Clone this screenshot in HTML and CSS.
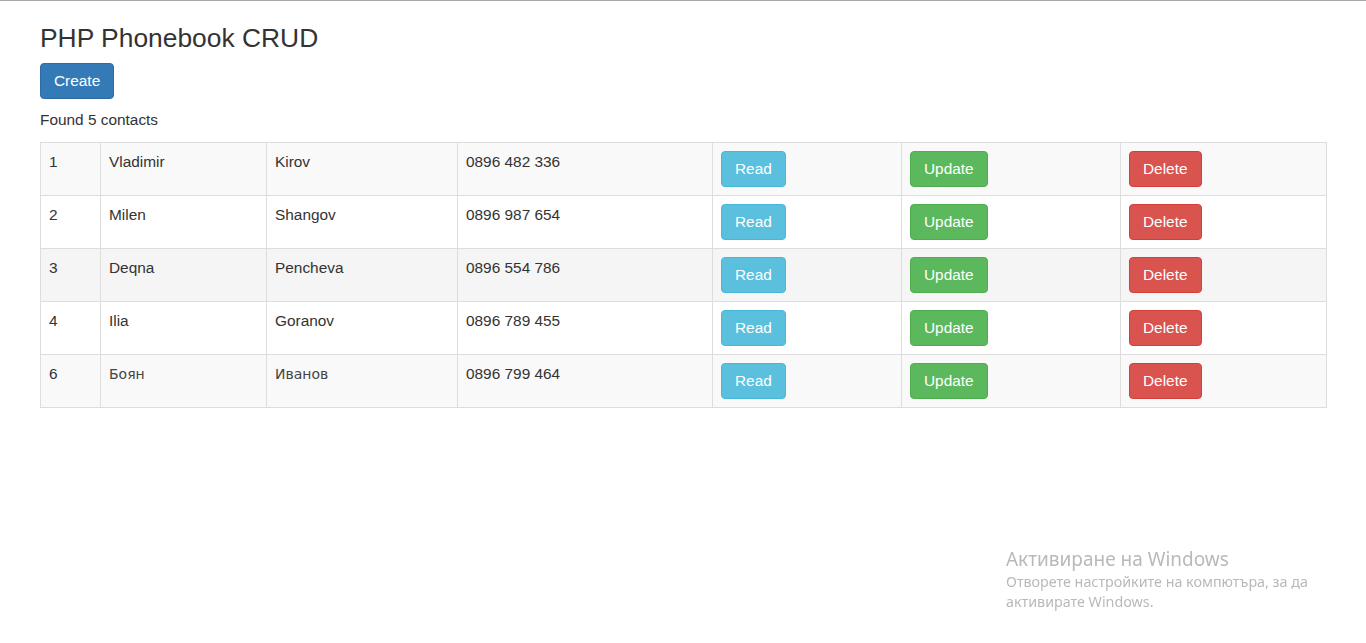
FILE: index.html
```html
<!DOCTYPE html>
<html lang="en">
<head>
<meta charset="utf-8">
<title>PHP Phonebook CRUD</title>
<link rel="stylesheet" href="styles.css">
</head>
<body>
<div class="container">
  <h3 class="title">PHP Phonebook CRUD</h3>
  <a class="btn btn-primary" href="#">Create</a>
  <p class="found">Found 5 contacts</p>
  <table class="table">
    <colgroup>
      <col class="c-id"><col class="c-first"><col class="c-last"><col class="c-phone"><col class="c-read"><col class="c-update"><col class="c-delete">
    </colgroup>
    <tbody>
      <tr class="odd">
        <td>1</td><td>Vladimir</td><td>Kirov</td><td>0896 482 336</td>
        <td><a class="btn btn-info" href="#">Read</a></td>
        <td><a class="btn btn-success" href="#">Update</a></td>
        <td><a class="btn btn-danger" href="#">Delete</a></td>
      </tr>
      <tr>
        <td>2</td><td>Milen</td><td>Shangov</td><td>0896 987 654</td>
        <td><a class="btn btn-info" href="#">Read</a></td>
        <td><a class="btn btn-success" href="#">Update</a></td>
        <td><a class="btn btn-danger" href="#">Delete</a></td>
      </tr>
      <tr class="odd hover">
        <td>3</td><td>Deqna</td><td>Pencheva</td><td>0896 554 786</td>
        <td><a class="btn btn-info" href="#">Read</a></td>
        <td><a class="btn btn-success" href="#">Update</a></td>
        <td><a class="btn btn-danger" href="#">Delete</a></td>
      </tr>
      <tr>
        <td>4</td><td>Ilia</td><td>Goranov</td><td>0896 789 455</td>
        <td><a class="btn btn-info" href="#">Read</a></td>
        <td><a class="btn btn-success" href="#">Update</a></td>
        <td><a class="btn btn-danger" href="#">Delete</a></td>
      </tr>
      <tr class="odd">
        <td>6</td><td class="cyr">Боян</td><td class="cyr">Иванов</td><td>0896 799 464</td>
        <td><a class="btn btn-info" href="#">Read</a></td>
        <td><a class="btn btn-success" href="#">Update</a></td>
        <td><a class="btn btn-danger" href="#">Delete</a></td>
      </tr>
    </tbody>
  </table>
</div>
<div class="watermark">
  <div class="wm-title">Активиране на Windows</div>
  <div class="wm-text">Отворете настройките на компютъра, за да<br>активирате Windows.</div>
</div>
</body>
</html>
```
FILE: styles.css
```css
* { box-sizing: border-box; }
html, body { margin: 0; padding: 0; }
body {
  font-family: "Liberation Sans", Arial, Helvetica, sans-serif;
  font-size: 15.4px;
  line-height: 22px;
  color: #333;
  background: #fff;
  border-top: 1px solid #a8a8a8;
}
.container {
  padding: 22px 39px 0 40px;
}
.title {
  margin: 0 0 9px;
  font-size: 26.4px;
  font-weight: 400;
  line-height: 31px;
  color: #333;
}
.btn {
  display: inline-block;
  padding: 6px 13px;
  font-size: 15.4px;
  line-height: 22px;
  border: 1px solid transparent;
  border-radius: 4px;
  color: #fff;
  text-decoration: none;
  white-space: nowrap;
  vertical-align: middle;
}
.btn-primary { background: #337ab7; border-color: #2e6da4; }
.btn-info { background: #5bc0de; border-color: #46b8da; }
.btn-success { background: #5cb85c; border-color: #4cae4c; }
.btn-danger { background: #d9534f; border-color: #d43f3a; }
.found {
  margin: 10px 0 11px;
}
.table {
  width: 100%;
  border-collapse: collapse;
  table-layout: fixed;
  border: 1px solid #ddd;
}
.table td {
  border: 1px solid #ddd;
  padding: 8px 8px;
  vertical-align: top;
  line-height: 22px;
}
.table tr.odd { background: #f9f9f9; }
.table tr.hover { background: #f5f5f5; }
.cyr { font-family: "DejaVu Sans", "Liberation Sans", sans-serif; font-size: 14px; color: #444; }
.c-id { width: 60px; }
.c-first { width: 166px; }
.c-last { width: 191px; }
.c-phone { width: 255px; }
.c-read { width: 189px; }
.c-update { width: 219px; }
.watermark {
  position: fixed;
  left: 1006px;
  top: 546px;
  font-family: "Noto Sans", "Open Sans", sans-serif;
  color: #b9b9b9;
}
.wm-title {
  font-size: 19px;
  line-height: 26px;
}
.wm-text {
  font-size: 14.3px;
  line-height: 20px;
}
```
